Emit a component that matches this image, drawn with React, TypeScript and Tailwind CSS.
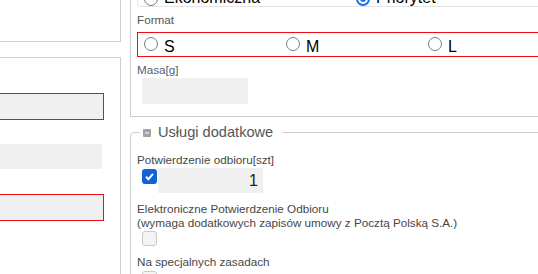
import React from "react";

function Radio({ checked = false }: { checked?: boolean }) {
  return (
    <span
      className={
        checked
          ? "w-[14px] h-[14px] shrink-0 rounded-full border-2 border-[#1a73e8] bg-white flex items-center justify-center"
          : "block w-[14px] h-[14px] shrink-0 rounded-full border border-[#7a7a7a] bg-white"
      }
    >
      {checked && <span className="block w-[6px] h-[6px] rounded-full bg-[#1a73e8]" />}
    </span>
  );
}

function Check({ checked = false }: { checked?: boolean }) {
  if (checked) {
    return (
      <span className="w-[15px] h-[15px] shrink-0 rounded-[3px] bg-[#1262d6] flex items-center justify-center">
        <svg width="11" height="11" viewBox="0 0 11 11">
          <path d="M2 5.8 L4.4 8.2 L9 2.8" fill="none" stroke="#fff" strokeWidth="2" />
        </svg>
      </span>
    );
  }
  return <span className="block w-[15px] h-[15px] shrink-0 rounded-[3px] border border-[#c9c9c9] bg-[#f3f3f3]" />;
}

export default function App() {
  return (
    <div className="w-[538px] h-[274px] overflow-hidden bg-white flex font-['Liberation_Sans',Arial,sans-serif] text-[11.7px] leading-[14px] text-[#474747]">
      {/* Left column */}
      <div className="w-[121px] shrink-0 flex flex-col">
        <div className="h-[42px] border-r border-b border-[#cfcfcf]" />
        <div className="mt-[15px] flex-1 border-t border-r border-[#cfcfcf] flex flex-col">
          <div className="mt-[35px] -ml-[4px] w-[108px] h-[27px] border border-[#ee1111] bg-[#f0f0f0]" />
          <div className="mt-[24px] -ml-[4px] w-[106px] h-[25px] bg-[#f0f0f0]" />
          <div className="mt-[25px] -ml-[4px] w-[108px] h-[27px] border border-[#ee1111] bg-[#f0f0f0]" />
        </div>
      </div>

      {/* Right column */}
      <div className="ml-[9px] w-[460px] shrink-0 flex flex-col">
        {/* Shipment fieldset */}
        <div className="h-[117px] shrink-0 border-l border-b border-[#cfcfcf] pl-[6px] flex flex-col">
          <div className="-mt-[20px] h-[27px] border border-[#e4e4e4] rounded-[3px] flex items-start text-[16px] leading-[16px] text-black">
            <div className="w-[212px] ml-[6px] mt-[9px] flex items-end gap-[6px]">
              <Radio />
              <span>Ekonomiczna</span>
            </div>
            <div className="mt-[9px] flex items-end gap-[6px]">
              <Radio checked />
              <span>Priorytet</span>
            </div>
          </div>

          <div className="mt-[6px] text-[#555]">Format</div>
          <div className="mt-[5px] w-[500px] h-[25px] border border-[#ee1111] pl-[6px] grid grid-cols-[142px_142px_142px] text-[16px] leading-[16px] text-black">
            <label className="flex items-start gap-[6px]">
              <span className="mt-[4px] flex"><Radio /></span>
              <span className="mt-[6px]">S</span>
            </label>
            <label className="flex items-start gap-[6px]">
              <span className="mt-[4px] flex"><Radio /></span>
              <span className="mt-[6px]">M</span>
            </label>
            <label className="flex items-start gap-[6px]">
              <span className="mt-[4px] flex"><Radio /></span>
              <span className="mt-[6px]">L</span>
            </label>
          </div>

          <div className="mt-[6px] text-[#56607a]">Masa[g]</div>
          <div className="mt-[1px] ml-[5px] w-[106px] h-[26px] bg-[#f0f0f0]" />
        </div>

        {/* Additional services */}
        <fieldset className="mt-[6px] w-[460px] flex-1 border border-[#cfcfcf] rounded-[4px] pl-[6px]">
          <legend className="ml-[3px] pl-[3px] pr-[9px] flex items-center gap-[7px] text-[14.6px] leading-[18px] text-[#555]">
            <svg width="8" height="8" viewBox="0 0 8 8" className="mt-[2px]">
              <rect x="0" y="0" width="8" height="8" rx="1" fill="#a3a3a3" />
              <rect x="2" y="3.5" width="4" height="1" fill="#fff" />
            </svg>
            <span>Usługi dodatkowe</span>
          </legend>

          <div className="mt-[12px]">Potwierdzenie odbioru[szt]</div>
          <div className="mt-[1px] ml-[5px] flex items-start gap-[1px]">
            <span className="mt-[1px] flex"><Check checked /></span>
            <div className="w-[105px] h-[25px] bg-[#f0f0f0] flex items-center justify-end pr-[5px] text-[16px] leading-[16px] text-[#222]">
              1
            </div>
          </div>

          <div className="mt-[9px]">
            Elektroniczne Potwierdzenie Odbioru
            <br />
            (wymaga dodatkowych zapisów umowy z Pocztą Polską S.A.)
          </div>
          <div className="mt-[1px] ml-[5px] flex">
            <Check />
          </div>

          <div className="mt-[9px]">Na specjalnych zasadach</div>
          <div className="mt-[2px] ml-[5px] flex">
            <Check />
          </div>
        </fieldset>
      </div>
    </div>
  );
}
